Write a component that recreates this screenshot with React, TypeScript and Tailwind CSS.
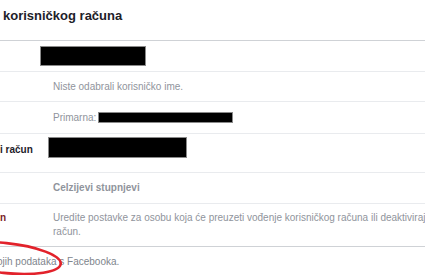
import React from "react";

export default function App() {
  return (
    <div className="relative w-[425px] h-[275px] overflow-hidden bg-white font-['Liberation_Sans',Arial,sans-serif] text-[10px] leading-[14px]">
      <div className="h-[40px] pl-[3px] pt-[8px] text-[13px] leading-[16px] font-bold text-[#1d2129] whitespace-nowrap">
        korisničkog računa
      </div>
      <div className="border-t border-[#cfd2d6]">
        {/* Row 1 */}
        <div className="h-[30px] flex items-center pl-[40px]">
          <div className="w-[106px] h-[20px] bg-black border border-[#8a8a8a]" />
        </div>
        {/* Row 2 */}
        <div className="h-[30px] border-t border-[#e9ebee] flex items-center pl-[53px] text-[#90949c] whitespace-nowrap">
          Niste odabrali korisničko ime.
        </div>
        {/* Row 3 */}
        <div className="h-[32px] border-t border-[#e9ebee] flex items-center pl-[53px] text-[#90949c] whitespace-nowrap">
          <span>Primarna:</span>
          <div className="ml-[2px] w-[135px] h-[11px] bg-black border border-[#8a8a8a]" />
        </div>
        {/* Row 4 */}
        <div className="h-[39px] border-t border-[#e9ebee] flex items-start pt-[3px] whitespace-nowrap">
          <span className="w-[48px] mt-[6px] font-bold text-[#1d2129]">i račun</span>
          <div className="w-[139px] h-[21px] bg-black border border-[#8a8a8a]" />
        </div>
        {/* Row 5 */}
        <div className="h-[31px] border-t border-[#e9ebee] flex items-center pl-[53px] font-bold text-[#90949c] whitespace-nowrap">
          Celzijevi stupnjevi
        </div>
        {/* Row 6 */}
        <div className="h-[43px] border-t border-[#e9ebee] flex items-start pt-[7px]">
          <span className="w-[53px] shrink-0 font-bold text-[#7a1f2b]">n</span>
          <p className="w-[395px] shrink-0 text-[#90949c]">
            Uredite postavke za osobu koja će preuzeti vođenje korisničkog računa ili deaktivirajte račun.
          </p>
        </div>
      </div>
      <div className="border-t border-[#cfd2d6] pt-[8px] -ml-[3px] text-[#80858c] whitespace-nowrap">
        ojih podataka s Facebooka.
      </div>
      <svg className="absolute left-0 top-0 pointer-events-none" width="425" height="275" viewBox="0 0 425 275">
        <ellipse cx="5" cy="258" rx="56" ry="15" transform="rotate(6 5 258)" fill="none" stroke="#e2222b" strokeWidth="2.6" />
      </svg>
    </div>
  );
}
